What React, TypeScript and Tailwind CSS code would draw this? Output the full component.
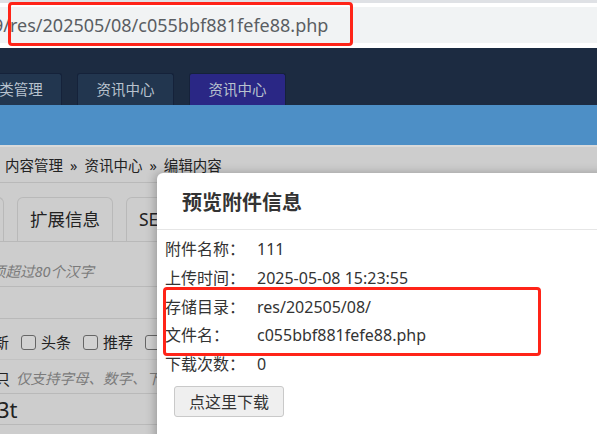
import React from 'react';

const FONT = { fontFamily: '"Noto Sans", "Noto Sans CJK SC", sans-serif' };

const INFO_ROWS = [
  { label: '附件名称：', value: '111' },
  { label: '上传时间：', value: '2025-05-08 15:23:55' },
  { label: '存储目录：', value: 'res/202505/08/' },
  { label: '文件名：', value: 'c055bbf881fefe88.php' },
  { label: '下载次数：', value: '0' },
];

const NavTab: React.FC<{ label: string; active?: boolean; className?: string }> = ({ label, active, className }) => (
  <div
    className={cn(
      'h-[32px] flex items-center justify-center rounded-t-[3px] border border-b-0 border-[#15223a] text-[14.5px] text-[#b8c2ce]',
      active ? 'bg-[#2a2785]' : 'bg-[#22364f]',
      className
    )}
  >
    {label}
  </div>
);

const Checkbox: React.FC<{ label: string }> = ({ label }) => (
  <span className="flex items-center gap-[5px]">
    <span className="w-[15px] h-[15px] rounded-[3px] border-[1.5px] border-[#666] bg-[#d2d2d2]" />
    <span>{label}</span>
  </span>
);

const App: React.FC = () => {
  return (
    <div className="relative w-[597px] h-[434px] overflow-hidden bg-[#cdcdcd] text-[#222]" style={FONT}>
      {/* browser address bar */}
      <div className="h-[48px] bg-white border-t-[3px] border-[#dfe1e5] pt-[4px]">
        <div className="h-[36px] bg-[#f1f3f4] flex items-center">
          <span className="ml-[-7px] text-[18px] text-[#5a5e63]">9/res/202505/08/c055bbf881fefe88.php</span>
        </div>
      </div>
      <div className="absolute left-[8px] top-[2px] w-[345px] h-[44px] border-[3px] border-[#ff2418] rounded-[4px]" />

      {/* top navigation */}
      <div className="h-[57px] bg-[#1c2b41] flex items-end">
        <NavTab label="类管理" className="ml-[-20px] w-[82px]" />
        <NavTab label="资讯中心" className="ml-[15px] w-[97px]" />
        <NavTab label="资讯中心" active className="ml-[15px] w-[97px]" />
      </div>
      <div className="h-[40px] bg-[#4d8fc6]" />

      {/* page content (dimmed) */}
      <div className="border-t-[2px] border-[#dadada]">
        <div className="h-[36px] flex items-center pl-[5px] pt-[3px] border-b border-[#b9b9b9] text-[14.5px]">
          <span>内容管理</span>
          <span className="mx-[7px]">»</span>
          <span>资讯中心</span>
          <span className="mx-[7px]">»</span>
          <span>编辑内容</span>
        </div>
        <div className="h-[59px] flex items-end gap-[13px] border-b border-[#b9b9b9]">
          <div className="w-[20px] ml-[-16px] h-[44px] rounded-tr-[6px] border border-b-0 border-[#b9b9b9]" />
          <div className="w-[96px] h-[44px] flex items-center justify-center rounded-t-[6px] border border-b-0 border-[#b9b9b9] text-[17.5px]">
            扩展信息
          </div>
          <div className="w-[96px] h-[44px] flex items-center pl-[12px] rounded-t-[6px] border border-b-0 border-[#b9b9b9] text-[17.5px]">
            SEO
          </div>
        </div>
        <div className="h-[45px] pt-[19px] border-b border-[#b9b9b9] text-[14.5px] italic text-[#7b7b7b] ml-[-9px]">
          须超过80个汉字
        </div>
        <div className="h-[32px] border-b border-[#b9b9b9]" />
        <div className="h-[41px] flex items-center pt-[6px] gap-[12px] border-b border-[#c2c2c2] text-[15px] ml-[-6px]">
          <span>新</span>
          <Checkbox label="头条" />
          <Checkbox label="推荐" />
          <Checkbox label="" />
        </div>
        <div className="h-[34px] flex items-center pt-[5px] gap-[6px] border-b border-[#b9b9b9] text-[15px] ml-[-5px]">
          <span>只</span>
          <span className="italic text-[#7b7b7b] text-[14.5px]">仅支持字母、数字、下</span>
        </div>
        <div className="h-[31px] flex items-center border-b border-[#b9b9b9] text-[22px] ml-[-3px]">
          3t
        </div>
      </div>

      {/* modal */}
      <div className="absolute left-[157px] top-[173px] w-[460px] h-[280px] bg-white rounded-tl-[6px] shadow-[-2px_0_10px_rgba(0,0,0,0.25)] text-[#333]">
        <div className="h-[57px] flex items-center pl-[25px] pt-[3px] border-b border-[#e6e6e6] text-[20px] font-bold">
          预览附件信息
        </div>
        <div className="pl-[8px] pt-[5px]">
          {INFO_ROWS.map((row) => (
            <div key={row.label} className="h-[28.7px] flex items-center text-[16px]">
              <span className="w-[92px]">{row.label}</span>
              <span>{row.value}</span>
            </div>
          ))}
          <button className="mt-[8px] ml-[9px] w-[110px] h-[31px] bg-[#efefef] border border-[#c9c9c9] rounded-[3px] text-[16px] text-[#333]">
            点这里下载
          </button>
        </div>
      </div>
      <div className="absolute left-[163px] top-[287px] w-[378px] h-[69px] border-[3px] border-[#ff2418] rounded-[4px]" />
    </div>
  );
};

function cn(...inputs: any[]) {
  return inputs.filter(Boolean).join(' ');
}

export default App;
